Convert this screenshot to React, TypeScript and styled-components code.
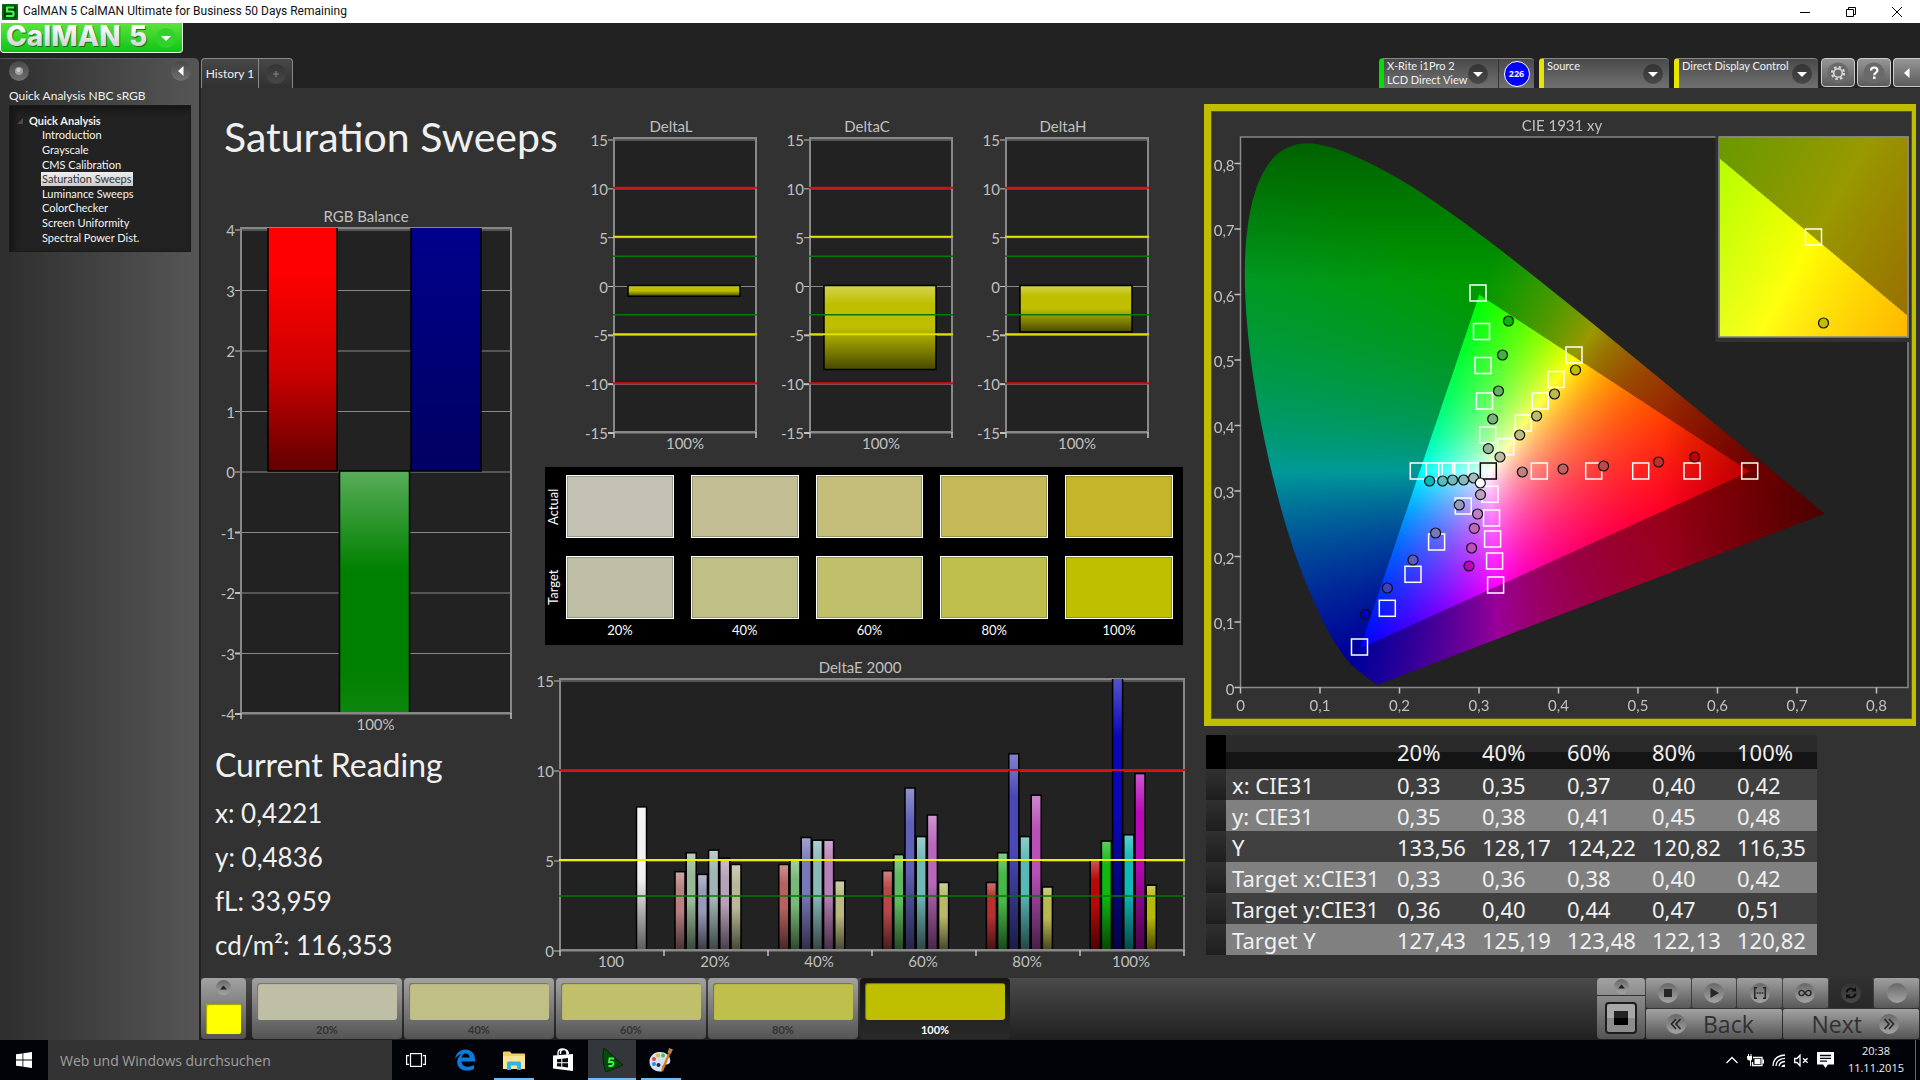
import React, { useLayoutEffect, useRef } from "react";
import styled, { createGlobalStyle, css } from "styled-components";

/* ---------- theme values ---------- */

const ui = '"Lato", "Open Sans", sans-serif';
const system = '"Open Sans", "Noto Sans", sans-serif';
const panelBg = "#323232";
const plotBg = "#222222";
const axisColor = "#888888";
const chartText = "#c0c0c0";

const GlobalStyle = createGlobalStyle`
  *, *::before, *::after { box-sizing: border-box; }
  body { margin: 0; background: #222; color: #f0f0f0; font-family: ${ui}; }
  button, input { font: inherit; color: inherit; border: 0; padding: 0; margin: 0; background: none; }
  h1, h2, p, ul { margin: 0; padding: 0; font-weight: 400; }
  svg, canvas { display: block; }
`;

/* ---------- data ---------- */

const saturations = ["20%", "40%", "60%", "80%", "100%"];
const actualColors = ["#c4c2b2", "#c4be94", "#c5bd7a", "#c5b95a", "#c4b628"];
const targetColors = ["#bfbfa6", "#bfbf86", "#bfbf6c", "#bfbf4c", "#bfbf00"];

const pages = [
  "Introduction",
  "Grayscale",
  "CMS Calibration",
  "Saturation Sweeps",
  "Luminance Sweeps",
  "ColorChecker",
  "Screen Uniformity",
  "Spectral Power Dist.",
];

const readings = ["x: 0,4221", "y: 0,4836", "fL: 33,959", "cd/m²: 116,353"];

const tableRows: [string, string[]][] = [
  ["x: CIE31", ["0,33", "0,35", "0,37", "0,40", "0,42"]],
  ["y: CIE31", ["0,35", "0,38", "0,41", "0,45", "0,48"]],
  ["Y", ["133,56", "128,17", "124,22", "120,82", "116,35"]],
  ["Target x:CIE31", ["0,33", "0,36", "0,38", "0,40", "0,42"]],
  ["Target y:CIE31", ["0,36", "0,40", "0,44", "0,47", "0,51"]],
  ["Target Y", ["127,43", "125,19", "123,48", "122,13", "120,82"]],
];

const sweepBars: { values: number[]; colors: string[] }[] = [
  {
    values: [4.35, 5.4, 4.2, 5.55, 5.1, 4.75],
    colors: ["#b88080", "#98b898", "#9898b8", "#a0b4b4", "#b8a0b8", "#b8b898"],
  },
  {
    values: [4.75, 5.0, 6.25, 6.1, 6.1, 3.85],
    colors: ["#b86060", "#78b878", "#7878b8", "#88b8b8", "#b880b8", "#b8b880"],
  },
  {
    values: [4.4, 5.3, 9.0, 6.3, 7.5, 3.75],
    colors: ["#b84848", "#60b860", "#6060b8", "#70b8b8", "#b868b8", "#b8b868"],
  },
  {
    values: [3.75, 5.4, 10.9, 6.3, 8.6, 3.5],
    colors: ["#b83030", "#48b848", "#4848b8", "#58b8b8", "#b850b8", "#b8b850"],
  },
  {
    values: [5.0, 6.05, 15.2, 6.4, 9.8, 3.6],
    colors: ["#b80808", "#10b810", "#0808b8", "#10b8b8", "#b808b8", "#b8b808"],
  },
];

/* ---------- window frame ---------- */

const Window = styled.div`
  display: flex;
  flex-direction: column;
  min-height: 100vh;
`;

const TitleBar = styled.header`
  display: flex;
  align-items: center;
  height: 23px;
  padding-left: 2px;
  background: #fff;
  color: #111;
  font: 12px/23px "Roboto", ${system};
`;

const TitleText = styled.span`
  flex: 1;
  padding-left: 5px;
`;

const CaptionButton = styled.button`
  display: grid;
  place-items: center;
  width: 46px;
  height: 20px;
`;

const Body = styled.div`
  display: grid;
  grid-template-columns: 199px minmax(0, 1fr);
  flex: 1;
`;

const LeftColumn = styled.div`
  display: flex;
  flex-direction: column;
`;

const LogoButton = styled.button`
  display: flex;
  align-items: center;
  gap: 8px;
  width: 183px;
  height: 30px;
  padding-left: 5px;
  border: 1px solid #e8ffe8;
  border-top: 0;
  border-radius: 0 0 4px 4px;
  background: linear-gradient(#5fe23c, #0fc414);
  overflow: hidden;
`;

const Sidebar = styled.nav`
  flex: 1;
  margin-top: 5px;
  padding: 2px 8px 0 9px;
  border-top: 1px solid #555;
  border-radius: 0 5px 0 0;
  background: linear-gradient(90deg, #2e2e2e, #565656);
`;

const SidebarTop = styled.div`
  display: flex;
  justify-content: space-between;
  height: 26px;
`;

const RoundButton = styled.button`
  display: grid;
  place-items: center;
  flex: none;
  width: 20px;
  height: 20px;
  border-radius: 50%;
  background: linear-gradient(#484848, #707070);
`;

const WorkflowName = styled.div`
  font-size: 12px;
  line-height: 18px;
`;

const Tree = styled.div`
  height: 147px;
  padding: 8px 0 0 17px;
  border: 1px solid #1a1a1a;
  background: #222;
  box-shadow: inset 4px 4px 6px #151515;
  font-size: 11px;
`;

const TreeRoot = styled.div`
  display: flex;
  align-items: center;
  gap: 6px;
  margin-left: -10px;
  line-height: 14px;
  font-weight: 700;
`;

const TreeList = styled.ul`
  display: flex;
  flex-direction: column;
  height: 117px;
  padding-left: 14px;
  list-style: none;
`;

const TreeItem = styled.li`
  display: flex;
  flex: 1;
  align-items: center;
`;

const TreeLink = styled.a<{ $active: boolean }>`
  padding: 0 1px;
  line-height: 14px;
  color: ${(p) => (p.$active ? "#333" : "#f4f4f4")};
  background: ${(p) => (p.$active ? "linear-gradient(#eee, #ccc)" : "none")};
  text-decoration: none;
  white-space: nowrap;
`;

/* ---------- top bar ---------- */

const Workspace = styled.main`
  display: flex;
  flex-direction: column;
  min-width: 0;
  border-left: 2px solid #222;
`;

const TopBar = styled.div`
  display: flex;
  justify-content: space-between;
  height: 65px;
  padding-top: 35px;
`;

const Tabs = styled.div`
  display: flex;
  height: 30px;
  border: 1px solid #888;
  border-bottom: 0;
  border-radius: 4px 4px 0 0;
  background: linear-gradient(#484848, #303030);
`;

const Tab = styled.button`
  width: 57px;
  border-right: 1px solid #888;
  font-size: 12px;
`;

const AddTab = styled.button`
  display: grid;
  place-items: center;
  width: 33px;
`;

const Devices = styled.div`
  display: flex;
  gap: 5px;
`;

const Device = styled.div<{ $width: number; $mark: string }>`
  display: flex;
  width: ${(p) => p.$width}px;
  height: 30px;
  border-top: 1px solid #888;
  border-left: 5px solid ${(p) => p.$mark};
  border-radius: 4px 4px 0 0;
  background: linear-gradient(#4a4a4a, #707070);
`;

const DeviceMenu = styled.button<{ $inset?: number }>`
  display: flex;
  flex: 1;
  align-items: center;
  justify-content: space-between;
  padding: 0 ${(p) => p.$inset ?? 6}px 0 3px;
  font-size: 11px;
  line-height: 14px;
  text-align: left;
  white-space: nowrap;
`;

const DeviceLabel = styled.span`
  align-self: flex-start;
`;

const Counter = styled.div`
  display: grid;
  place-items: center;
  width: 36px;
  border-left: 1px solid #333;
`;

const CounterBadge = styled.span`
  width: 26px;
  height: 26px;
  border: 1px solid #fff;
  border-radius: 50%;
  background: #0000ff;
  font: 700 9px/24px ${system};
  text-align: center;
`;

const Tools = styled.div`
  display: flex;
  gap: 2px;
  margin-left: -2px;
`;

const ToolButton = styled.button<{ $edge?: boolean }>`
  display: grid;
  place-items: center;
  width: ${(p) => (p.$edge ? 27 : 34)}px;
  height: 29px;
  border: 1px solid #ccc;
  border-right-width: ${(p) => (p.$edge ? 0 : 1)}px;
  border-radius: ${(p) => (p.$edge ? "4px 0 0 4px" : "4px")};
  background: linear-gradient(#969696, #5c5c5c);
`;

/* ---------- content ---------- */

const Content = styled.div`
  display: grid;
  grid-template-columns: minmax(0, 334fr) minmax(0, 669fr) minmax(0, 712fr);
  align-items: start;
  flex: 1;
  padding-right: 4px;
  background: ${panelBg};
`;

const ReadingColumn = styled.section`
  padding-top: 24px;
`;

const Heading = styled.h1`
  padding-left: 23px;
  margin-bottom: 38px;
  font-size: 41px;
  line-height: 50px;
  white-space: nowrap;
`;

const Reading = styled.div`
  padding: 10px 0 0 14px;
`;

const ReadingTitle = styled.h2`
  margin-bottom: 6px;
  font-size: 32px;
  line-height: 40px;
`;

const ReadingLine = styled.p`
  font-size: 26px;
  line-height: 44px;
`;

const SweepColumn = styled.section`
  padding-top: 25px;
`;

const DeltaRow = styled.div`
  display: grid;
  grid-template-columns: repeat(3, minmax(0, 1fr));
  padding: 0 49px 0 32px;
`;

const ChartSvg = styled.svg`
  width: 100%;
  height: auto;
  font-family: ${ui};
  font-size: 15px;
  fill: ${chartText};
`;

const SwatchPanel = styled.div`
  display: grid;
  grid-template-rows: 63px 63px 20px;
  row-gap: 18px;
  height: 178px;
  margin: 12px 21px 10px 10px;
  padding: 8px 10px 0 0;
  background: #000;
  color: #fff;
  font-size: 13px;
`;

const SwatchRow = styled.div`
  display: grid;
  grid-template-columns: 21px minmax(0, 1fr);
`;

const SwatchCaption = styled.span`
  width: 17px;
  line-height: 17px;
  text-align: center;
  writing-mode: vertical-rl;
  transform: rotate(180deg);
`;

const SwatchCells = styled.div`
  display: grid;
  grid-column: 2;
  grid-template-columns: repeat(5, 1fr);
  column-gap: 17px;
`;

const SwatchCell = styled.div<{ $color: string }>`
  border: 1px solid #fff;
  background: ${(p) => p.$color};
  box-shadow: inset 0 0 0 1px rgba(0, 0, 0, 0.2);
`;

const SwatchLabel = styled.span`
  margin-top: -15px;
  line-height: 17px;
  text-align: center;
`;

const GamutColumn = styled.section`
  padding-top: 16px;
`;

const GamutFrame = styled.div`
  display: grid;
  border: 7px solid #bfbf00;
  border-right-width: 4px;
  box-shadow: inset 0 0 0 1px #5a5a20;

  > * {
    grid-area: 1 / 1;
  }
`;

const GamutCanvas = styled.canvas`
  width: 100%;
  height: auto;
`;

const DataTable = styled.table`
  width: 611px;
  margin: 9px 0 0 2px;
  border-collapse: collapse;
  table-layout: fixed;
  font: 22px/30px "Noto Sans", sans-serif;
  text-align: left;
`;

const Column = styled.col<{ $width: number }>`
  width: ${(p) => p.$width}px;
`;

const HeadCell = styled.th<{ $corner?: boolean }>`
  height: 34px;
  padding: 0;
  font-weight: 400;
  background: ${(p) => (p.$corner ? "#000" : "linear-gradient(#2a2a2a 0 50%, #141414 50% 100%)")};
`;

const RowMark = styled.td`
  padding: 0;
  background: linear-gradient(#303030, #1e1e1e);
`;

const BodyRow = styled.tr<{ $light: boolean }>`
  height: 31px;
  background: ${(p) => (p.$light ? "#808080" : "#404040")};
`;

const RowHead = styled.th`
  padding: 0 0 0 6px;
  font-weight: 400;
  white-space: nowrap;
`;

const Cell = styled.td`
  padding: 0;
`;

/* ---------- pattern bar ---------- */

const PatternBar = styled.div`
  display: flex;
  height: 62px;
  background: linear-gradient(#4a4a4a, #202020);
`;

const metal = css`
  background: linear-gradient(#a2a2a2, #545454);
`;

const CurrentPattern = styled.button`
  display: flex;
  flex-direction: column;
  align-items: center;
  justify-content: space-between;
  width: 45px;
  height: 61px;
  margin-right: 6px;
  padding: 2px 0 5px;
  border-radius: 4px;
  ${metal}
`;

const CurrentColor = styled.span`
  width: 35px;
  height: 30px;
  border-radius: 2px;
  background: #ffff00;
  box-shadow: inset 1px 1px 1px #a0a000;
`;

const PatternButton = styled.button<{ $active: boolean }>`
  display: flex;
  flex-direction: column;
  width: 150px;
  height: 61px;
  margin-right: 2px;
  padding: 5px 5px 0;
  border-radius: 4px;
  ${metal}
  color: #333;
  font-size: 11px;
  font-weight: 700;
  ${(p) =>
    p.$active &&
    css`
      background: linear-gradient(#161616, #2a2a2a);
      color: #fff;
    `}
`;

const PatternColor = styled.span<{ $color: string }>`
  width: 100%;
  height: 37px;
  margin-bottom: 3px;
  border-radius: 3px;
  background: ${(p) => p.$color};
  box-shadow: inset 1px 1px 1px rgba(0, 0, 0, 0.4);
`;

const PatternLabel = styled.span`
  width: 100%;
  line-height: 14px;
  text-align: center;
`;

const Transport = styled.div`
  display: flex;
  gap: 1px;
  margin-left: auto;
  padding-right: 1px;
`;

const WindowPicker = styled.button`
  display: flex;
  flex-direction: column;
  align-items: center;
  width: 48px;
  height: 61px;
  border-radius: 4px;
  ${metal}
`;

const PickerTop = styled.span`
  display: grid;
  place-items: center;
  width: 100%;
  height: 18px;
  border-bottom: 1px solid #333;
`;

const PickerFrame = styled.span`
  display: grid;
  place-items: center;
  width: 32px;
  height: 32px;
  margin-top: 6px;
  border: 2px solid #1c1c1c;
  border-radius: 4px;
  background: linear-gradient(#a8a8a8 50%, #8c8c8c 50%);
`;

const PickerSquare = styled.span`
  width: 14px;
  height: 14px;
  background: linear-gradient(#222 50%, #000 50%);
`;

const TransportGrid = styled.div`
  display: grid;
  grid-template-columns: repeat(6, minmax(0, 1fr));
  grid-template-rows: 30px 30px;
  gap: 1px;
  width: 273px;
`;

const TransportButton = styled.button<{ $pressed?: boolean }>`
  display: grid;
  place-items: center;
  border-radius: 2px;
  background: ${(p) => (p.$pressed ? "linear-gradient(#303030, #282828)" : "linear-gradient(#a0a0a0, #585858)")};
`;

const Disc = styled.span<{ $size: number; $dark?: boolean }>`
  display: grid;
  place-items: center;
  flex: none;
  width: ${(p) => p.$size}px;
  height: ${(p) => p.$size}px;
  border-radius: 50%;
  background: ${(p) => (p.$dark ? "linear-gradient(#343434, #484848)" : "linear-gradient(#686868, #a4a4a4)")};
`;

const StepButton = styled.button<{ $forward?: boolean }>`
  display: flex;
  grid-column: span 3;
  align-items: center;
  justify-content: ${(p) => (p.$forward ? "flex-end" : "flex-start")};
  gap: 17px;
  padding: 0 20px;
  border-radius: 2px;
  ${metal}
  color: #303030;
  font: 23px/28px ${system};
`;

/* ---------- taskbar ---------- */

const Taskbar = styled.footer`
  display: flex;
  height: 40px;
  background: #010308;
  font-family: ${system};
`;

const StartButton = styled.button`
  display: grid;
  place-items: center;
  width: 48px;
`;

const Search = styled.input`
  width: 344px;
  padding-left: 12px;
  background: #333;
  font-size: 14px;
  outline: 0;

  &::placeholder {
    color: #a0a0a0;
    opacity: 1;
  }
`;

const TaskButton = styled.button<{ $open?: boolean; $active?: boolean }>`
  display: grid;
  place-items: center;
  width: ${(p) => (p.$active ? 48 : p.$open ? 40 : 48)}px;
  margin: 0 ${(p) => (p.$open && !p.$active ? 4 : 0)}px;
  padding-top: ${(p) => (p.$open ? 2 : 0)}px;
  border-bottom: ${(p) => (p.$open ? "2px solid #76b9ed" : "0")};
  background: ${(p) => (p.$active ? "#33373c" : "none")};
`;

const Apps = styled.div`
  display: flex;
  gap: 1px;
`;

const Tray = styled.div`
  display: flex;
  align-items: center;
  gap: 8px;
  margin-left: auto;
  padding-right: 4px;
`;

const Clock = styled.time`
  height: 40px;
  margin-left: 6px;
  padding: 2px 11px 0 0;
  border-right: 1px solid #666;
  font-size: 11px;
  line-height: 17px;
  text-align: center;
`;

/* ---------- charts ---------- */

type Bar = { x: number; w: number; from: number; to: number; color: string; shade?: string };
type Limit = { value: number; color: string };

type BarChartProps = {
  id: string;
  title: string;
  titleX: number;
  size: [number, number];
  plot: [number, number, number, number];
  range: [number, number];
  step: number;
  bars: Bar[];
  limits?: Limit[];
  labels: { x: number; text: string }[];
  ticks: number[];
};

function BarChart({ id, title, titleX, size, plot, range, step, bars, limits = [], labels, ticks }: BarChartProps) {
  const [px, py, pw, ph] = plot;
  const [min, max] = range;
  const top = py + 2;
  const toY = (v: number) => top + ((max - v) / (max - min)) * (ph - 1);
  const marks: number[] = [];
  for (let v = max; v >= min; v -= step) marks.push(v);

  return (
    <ChartSvg viewBox={`0 0 ${size[0]} ${size[1]}`} role="img" aria-label={title}>
      <defs>
        <linearGradient id={`${id}-gloss`} x1="0" y1="0" x2="0" y2="1">
          <stop offset="0" stopColor="#fff" stopOpacity="0.32" />
          <stop offset="0.22" stopColor="#fff" stopOpacity="0" />
          <stop offset="0.5" stopColor="#000" stopOpacity="0" />
          <stop offset="1" stopColor="#000" stopOpacity="0.62" />
        </linearGradient>
        <linearGradient id={`${id}-fade`} x1="0" y1="0" x2="0" y2="1">
          <stop offset="0.2" stopColor="#000" stopOpacity="0" />
          <stop offset="0.6" stopColor="#000" stopOpacity="0.2" />
          <stop offset="1" stopColor="#000" stopOpacity="0.62" />
        </linearGradient>
        <linearGradient id={`${id}-tip`} x1="0" y1="0" x2="0" y2="1">
          <stop offset="0" stopColor="#fff" stopOpacity="0.35" />
          <stop offset="0.4" stopColor="#fff" stopOpacity="0" />
          <stop offset="0.8" stopColor="#fff" stopOpacity="0" />
          <stop offset="1" stopColor="#fff" stopOpacity="0.06" />
        </linearGradient>
        <linearGradient id={`${id}-deep`} x1="0" y1="0" x2="0" y2="1">
          <stop offset="0" stopColor="#000" stopOpacity="0" />
          <stop offset="1" stopColor="#000" stopOpacity="0.3" />
        </linearGradient>
        <clipPath id={`${id}-clip`}>
          <rect x={px} y={py} width={pw} height={ph} />
        </clipPath>
      </defs>
      <text x={titleX} y={py - 6} textAnchor="middle">
        {title}
      </text>
      <rect x={px} y={py} width={pw} height={ph} fill={plotBg} />
      {marks.map((v) => (
        <g key={v}>
          <line x1={px} x2={px + pw} y1={toY(v)} y2={toY(v)} stroke={axisColor} />
          <line x1={px - 6} x2={px} y1={toY(v)} y2={toY(v)} stroke={chartText} strokeWidth={v < 0 ? 2 : 1} />
          <text x={px - 6} y={toY(v) + 6} textAnchor="end">
            {v}
          </text>
        </g>
      ))}
      <rect x={px} y={py} width={pw} height={ph} fill="none" stroke={axisColor} strokeWidth="2" />
      <g clipPath={`url(#${id}-clip)`}>
        {bars.map((b, i) => {
          const y = toY(Math.max(b.from, b.to)) - 1;
          const h = toY(Math.min(b.from, b.to)) - 1 - y;
          return (
            <g key={i}>
              <rect x={b.x} y={y} width={b.w} height={h} fill={b.color} />
              <rect
                x={b.x}
                y={y}
                width={b.w}
                height={h}
                fill={`url(#${id}-${b.shade ?? "gloss"})`}
                stroke="#000"
                strokeWidth="1.5"
              />
            </g>
          );
        })}
      </g>
      <line x1={px} x2={px + pw} y1={py + ph} y2={py + ph} stroke={axisColor} strokeWidth="2" />
      {limits.map((l, i) => (
        <line
          key={i}
          x1={px - 1}
          x2={px + pw + 1}
          y1={toY(l.value) - 1}
          y2={toY(l.value) - 1}
          stroke={l.color}
          strokeWidth={l.color === "#007a00" ? 1.5 : 2}
        />
      ))}
      {ticks.map((x) => (
        <line key={x} x1={x} x2={x} y1={py + ph} y2={py + ph + 6} stroke={chartText} strokeWidth="1.5" />
      ))}
      {labels.map((l) => (
        <text key={l.text} x={l.x} y={py + ph + 17} textAnchor="middle">
          {l.text}
        </text>
      ))}
    </ChartSvg>
  );
}

const deltaLimits: Limit[] = [10, -10, 5, -5, 3, -3].map((value) => ({
  value,
  color: Math.abs(value) === 10 ? "#dc0a0a" : Math.abs(value) === 5 ? "#e0e000" : "#007a00",
}));

function DeltaChart({ name, value }: { name: string; value: number }) {
  return (
    <BarChart
      id={name}
      title={name}
      titleX={104}
      size={[196, 342]}
      plot={[47, 25, 142, 294]}
      range={[-15, 15]}
      step={5}
      bars={[{ x: 61, w: 112, from: 0, to: value, color: "#bfbf00" }]}
      limits={deltaLimits}
      labels={[{ x: 118, text: "100%" }]}
      ticks={[47, 189]}
    />
  );
}

/* ---------- CIE 1931 chromaticity diagram ---------- */

const GW = 701;
const GH = 608;
const box = { x: 29.5, y: 26, w: 667.5, h: 550.5 };
const inset = { x: 508, y: 26, w: 189, h: 200 };

const locus: [number, number][] = [
  [0.1741, 0.005], [0.1733, 0.0048], [0.1714, 0.0051], [0.1689, 0.0069], [0.1644, 0.0109],
  [0.1566, 0.0177], [0.144, 0.0297], [0.1355, 0.0399], [0.1241, 0.0578], [0.1096, 0.0868],
  [0.0913, 0.1327], [0.0687, 0.2007], [0.0454, 0.295], [0.0235, 0.4127], [0.0082, 0.5384],
  [0.0039, 0.6548], [0.0139, 0.7502], [0.0389, 0.812], [0.0743, 0.8338], [0.1142, 0.8262],
  [0.1547, 0.8059], [0.1929, 0.7816], [0.2296, 0.7543], [0.3016, 0.6923], [0.3731, 0.6245],
  [0.4441, 0.5547], [0.5125, 0.4866], [0.5752, 0.4242], [0.627, 0.3725], [0.6658, 0.334],
  [0.6915, 0.3083], [0.719, 0.2809], [0.7347, 0.2653],
];

const toPlot = (x: number, y: number): [number, number] => [box.x + x * 795, box.y + box.h - y * 655];

function xyColor(x: number, y: number): [number, number, number] {
  const yy = Math.max(y, 0.001);
  const X = x / yy;
  const Z = (1 - x - yy) / yy;
  const r = 3.2406 * X - 1.5372 - 0.4986 * Z;
  const g = -0.9689 * X + 1.8758 + 0.0415 * Z;
  const b = 0.0557 * X - 0.204 + 1.057 * Z;
  const inside = r >= 0 && g >= 0 && b >= 0;
  let level = 255 / Math.max(r, g, b);
  if (!inside) level *= 0.6;
  if (x > 0.53) level *= Math.max(0.5, 1 - (x - 0.53) * 2.5);
  if (y > 0.62) level *= Math.max(0.6, 1 - (y - 0.62) * 1.7);
  return [Math.max(0, r * level), Math.max(0, g * level), Math.max(0, b * level)];
}

function paintGamut(canvas: HTMLCanvasElement) {
  const scale = 2;
  const w = GW * scale;
  const h = GH * scale;
  canvas.width = w;
  canvas.height = h;
  const ctx = canvas.getContext("2d");
  if (!ctx) return;

  const fill = (ox: number, oy: number, iw: number, ih: number, map: (x: number, y: number) => [number, number]) => {
    const img = ctx.createImageData(iw, ih);
    for (let j = 0; j < ih; j++) {
      for (let i = 0; i < iw; i++) {
        const [cx, cy] = map((ox + i) / scale, (oy + j) / scale);
        const [r, g, b] = xyColor(cx, cy);
        const k = (j * iw + i) * 4;
        img.data[k] = r;
        img.data[k + 1] = g;
        img.data[k + 2] = b;
        img.data[k + 3] = 255;
      }
    }
    ctx.putImageData(img, ox, oy);
  };

  fill(0, 0, w, h, (px, py) => [(px - box.x) / 795, (box.y + box.h - py) / 655]);

  ctx.globalCompositeOperation = "destination-in";
  ctx.scale(scale, scale);
  const pts = locus.map(([x, y]) => toPlot(x, y));
  ctx.beginPath();
  ctx.moveTo(pts[0][0], pts[0][1]);
  for (let i = 1; i < pts.length - 1; i++) {
    const mx = (pts[i][0] + pts[i + 1][0]) / 2;
    const my = (pts[i][1] + pts[i + 1][1]) / 2;
    ctx.quadraticCurveTo(pts[i][0], pts[i][1], mx, my);
  }
  ctx.lineTo(pts[pts.length - 1][0], pts[pts.length - 1][1]);
  ctx.closePath();
  ctx.fill();

  ctx.globalCompositeOperation = "destination-over";
  ctx.fillStyle = plotBg;
  ctx.fillRect(box.x, box.y, box.w, box.h);

  ctx.globalCompositeOperation = "source-over";
  fill(inset.x * scale, inset.y * scale, inset.w * scale, inset.h * scale, (px, py) => [
    0.4193 + (px - 602.6) / 3780,
    0.5053 - (py - 126) / 3980,
  ]);
}

const targets: [number, number][] = [
  [267, 182], [270.5, 220.5], [272, 254.5], [273.5, 290], [276.7, 324],
  [363, 244], [345, 268.5], [329.3, 290], [312.3, 312], [294.7, 335.7],
  [328.3, 360], [382.7, 360], [429.7, 360], [481, 360], [538.7, 360],
  [207.3, 360], [223.3, 360], [235.7, 360], [249.7, 360], [265.3, 360],
  [279, 383.3], [280.5, 407], [281.6, 428], [283.6, 450], [284.6, 474],
  [252.3, 395], [225.6, 431], [202, 463.3], [176.3, 497.3], [148.5, 536],
];

const measured: [number, number, string][] = [
  [297.5, 210, "#00b800"], [291.5, 244, "#40b040"], [287.5, 280, "#60b460"], [281.7, 308, "#78b478"], [277.3, 337.6, "#98b898"],
  [364.5, 259, "#bfbf00"], [343.5, 283, "#bcbc4c"], [325.6, 305, "#bcbc6c"], [308.7, 324, "#bcbc86"], [289, 346, "#bcbca6"],
  [311.3, 361, "#c08080"], [352, 358, "#c06060"], [392.6, 355, "#c04848"], [447.6, 351, "#c03030"], [483.6, 346, "#bf0000"],
  [218.6, 370, "#00bcbc"], [231.6, 370, "#58bcbc"], [241.6, 369, "#70bcbc"], [252.6, 369, "#88bcbc"], [262.6, 367, "#a4bcbc"],
  [248.3, 394, "#9898c0"], [224.6, 422, "#7878c0"], [202, 449, "#5c5cc0"], [176.3, 477, "#4040c0"], [154.3, 503.3, "#0000bf"],
  [269.5, 383.6, "#c0a0c0"], [266.6, 403, "#c080c0"], [263.3, 417.3, "#c068c0"], [260.6, 437, "#c04cc0"], [258, 455, "#bf00bf"],
  [269.3, 372, "#ffffff"],
];

function GamutChart() {
  const ref = useRef<HTMLCanvasElement>(null);
  useLayoutEffect(() => {
    if (ref.current) paintGamut(ref.current);
  }, []);
  const right = box.x + box.w;
  const bottom = box.y + box.h;
  const steps = [0, 1, 2, 3, 4, 5, 6, 7, 8];

  return (
    <GamutFrame>
      <GamutCanvas ref={ref} width={GW} height={GH} />
      <ChartSvg viewBox={`0 0 ${GW} ${GH}`} role="img" aria-label="CIE 1931 xy">
        <text x="351" y="20" textAnchor="middle">CIE 1931 xy</text>
        <rect x={box.x} y={box.y} width={box.w} height={box.h} fill="none" stroke={axisColor} strokeWidth="1.5" />
        {steps.map((s) => {
          const [x, y] = toPlot(s / 10, s / 10);
          const label = s === 0 ? "0" : `0,${s}`;
          return (
            <g key={s}>
              <line x1={x} x2={x} y1={bottom} y2={bottom + 6} stroke={chartText} strokeWidth="1.5" />
              <line x1={box.x - 6} x2={box.x} y1={y} y2={y} stroke={chartText} strokeWidth="1.5" />
              <text x={x} y={bottom + 23} textAnchor="middle">{label}</text>
              <text x={box.x - 6} y={y + 7} textAnchor="end">{label}</text>
            </g>
          );
        })}
        <path
          d={`M${inset.x - 1.5} ${inset.y - 1}V${inset.y + inset.h + 3}H${right + 1}`}
          fill="none"
          stroke={panelBg}
          strokeWidth="4"
        />
        <rect x={inset.x} y={inset.y} width={inset.w} height={inset.h} fill="none" stroke={axisColor} strokeWidth="1.5" />
        <rect x="594.5" y="118" width="16" height="16" fill="none" stroke="#fff" strokeWidth="1.5" />
        <circle cx="612.5" cy="212" r="5" fill="#bfbf00" stroke="#111" strokeWidth="1.2" />
        {targets.map(([x, y]) => (
          <rect key={`${x}-${y}`} x={x - 8} y={y - 8} width="16" height="16" fill="none" stroke="#fff" strokeWidth="1.5" />
        ))}
        <rect x="269.3" y="352" width="16" height="16" fill="none" stroke="#000" strokeWidth="1.5" />
        {measured.map(([x, y, c]) => (
          <circle key={`${x}-${y}`} cx={x} cy={y} r="5" fill={c} stroke="#111" strokeWidth="1.2" />
        ))}
      </ChartSvg>
    </GamutFrame>
  );
}

/* ---------- icons ---------- */

const Arrow = ({ dir, color = "#fff", size = 10 }: { dir: "down" | "left" | "up"; color?: string; size?: number }) => (
  <svg width={size} height={size} viewBox="0 0 10 10" fill={color}>
    {dir === "down" && <path d="M0 3h10L5 8z" />}
    {dir === "left" && <path d="M7.500 0v10L2 5z" />}
    {dir === "up" && <path d="M0 8h10L5 2z" />}
  </svg>
);

const AppBadge = () => (
  <svg width="16" height="16" viewBox="0 0 16 16">
    <rect width="16" height="16" rx="1" fill="#053d08" />
    <rect x="1" y="1" width="14" height="14" fill="none" stroke="#0b8a14" />
    <path d="M12 3.500H5v4h5q1.500 0 1.500 1.500v1.500q0 1.500-1.500 1.500H4" fill="none" stroke="#3dff4a" strokeWidth="2.200" />
  </svg>
);

const LogoMark = () => (
  <svg width="142" height="29" viewBox="0 0 142 29">
    <defs>
      <linearGradient id="logo-silver" x1="0" y1="0" x2="0" y2="1">
        <stop offset="0.2" stopColor="#ffffff" />
        <stop offset="1" stopColor="#c4c4c4" />
      </linearGradient>
    </defs>
    <g fontFamily="Inter, sans-serif" fontWeight="800" fontSize="28">
      <text x="1" y="24" fill="#0a7a10">CalMAN</text>
      <text x="0" y="23" fill="url(#logo-silver)">CalMAN</text>
      <text x="124" y="24" fill="#0a7a10">5</text>
      <text x="123" y="23" fill="url(#logo-silver)">5</text>
    </g>
  </svg>
);

const Gear = () => (
  <svg width="22" height="22" viewBox="0 0 22 22">
    <circle cx="11" cy="11" r="10.500" fill="#6a6a6a" />
    <circle cx="11" cy="11" r="4.300" fill="none" stroke="#d8d8d8" strokeWidth="1.600" />
    <circle cx="11" cy="11" r="6" fill="none" stroke="#d8d8d8" strokeWidth="2.200" strokeDasharray="2.400 2.312" />
  </svg>
);

const Help = () => (
  <svg width="22" height="22" viewBox="0 0 22 22">
    <circle cx="11" cy="11" r="10.500" fill="#6a6a6a" />
    <path d="M8 8.500q0-3 3.200-3t3.200 2.800q0 1.600-1.700 2.600-1.500.9-1.500 2.300" fill="none" stroke="#fff" strokeWidth="2.200" />
    <rect x="10" y="14.500" width="2.500" height="2.500" fill="#fff" />
  </svg>
);

const WindowsFlag = () => (
  <svg width="16" height="16" viewBox="0 0 16 16" fill="#fff">
    <path d="M0 2.300 6.500 1.400V7.600H0zM7.300 1.300 16 0v7.600H7.300zM0 8.400h6.500v6.200L0 13.700zM7.300 8.400H16V16l-8.700-1.300z" />
  </svg>
);

const TaskView = () => (
  <svg width="20" height="14" viewBox="0 0 20 14" fill="none" stroke="#fff" strokeWidth="1.200">
    <rect x="4.500" y=".6" width="11" height="12.800" />
    <path d="M3 2.600H.6v8.800H3M17 2.600h2.400v8.800H17" />
  </svg>
);

const Edge = () => (
  <svg width="22" height="22" viewBox="0 0 22 22">
    <path
      d="M1 10C2 4 6 .5 11.500.5c6 0 9.500 4.500 9.500 9.500v2.500H7.500c.2 3.500 3 5.300 6.300 5.300 2.500 0 4.500-.7 6.200-1.700v4c-2 1-4.300 1.500-6.800 1.500C7 21.600 3.200 18 3.200 13c0-3.500 1.800-6.300 4.800-7.800C4.800 5.600 2.500 7.500 1 10zm6.600-1.500h8c0-2.300-1.300-4-3.800-4s-3.900 1.700-4.200 4z"
      fill="#0a7bdc"
    />
  </svg>
);

const Explorer = () => (
  <svg width="22" height="19" viewBox="0 0 22 19">
    <path d="M0 1.500Q0 .5 1 .5h6l1.500 2H21q1 0 1 1V18H0z" fill="#f5cf66" />
    <path d="M0 5h22v13H0z" fill="#ffe592" />
    <path d="M4 19v-7q0-1.500 1.500-1.500h11Q18 10.500 18 12v7h-4v-4.500H8V19z" fill="#2fb4ea" />
  </svg>
);

const Store = () => (
  <svg width="22" height="24" viewBox="0 0 22 24">
    <path d="M6 7V4.500Q6.500 1 10.500 1T15 5v2M8.500 6V4q.5-3 4-2.500T16.500 6" fill="none" stroke="#fff" strokeWidth="1.400" />
    <path d="M1 7.500 21 6v17L1 20.500z" fill="#fff" />
    <path d="M5 11.300l4.300-.5v3.500H5zM10.300 10.700l5.700-.7v4.200h-5.700zM5 15.200h4.300v3.500L5 18.200zM10.300 15.200H16v4.300l-5.700-.7z" fill="#05070c" />
  </svg>
);

const CalmanTask = () => (
  <svg width="22" height="24" viewBox="0 0 22 24">
    <path d="M3 0 22 17 5 24Q0 12 3 0z" fill="#064a0a" />
    <path d="M3 0 22 17 5 24Q0 12 3 0z" fill="none" stroke="#022304" />
    <path d="M13 10.500H8.500L8 14h3q1.800.3 1.500 2T10.500 18H7.500" fill="none" stroke="#35ff45" strokeWidth="1.800" />
  </svg>
);

const Paint = () => (
  <svg width="24" height="24" viewBox="0 0 24 24">
    <path d="M10 4C4 4.500 0 9 .5 14.500 1 20 6 24 11.500 23.500c3 0 3-2 2.200-4-.6-2 .5-3 3-3 3.500 0 5-2 4.500-5C20.500 7 16 3.500 10 4z" fill="#cfe3f2" />
    <circle cx="5" cy="11" r="2" fill="#e24a3a" />
    <circle cx="9" cy="7.500" r="2" fill="#f0b030" />
    <circle cx="14" cy="7.500" r="2" fill="#58b848" />
    <circle cx="5" cy="16" r="2" fill="#4080d8" />
    <circle cx="9.500" cy="17" r="2" fill="#2a2a3a" />
    <path d="M13 23 20 6" stroke="#e07818" strokeWidth="2.200" />
    <path d="M18.500 5 20 0l4 1.500-2.500 5z" fill="#b88050" />
  </svg>
);

const TrayIcon = ({ name }: { name: "chevron" | "power" | "wifi" | "sound" | "note" }) => {
  const stroke = { fill: "none", stroke: "#fff", strokeWidth: 1.3 };
  switch (name) {
    case "chevron":
      return <svg width="14" height="8" viewBox="0 0 14 8"><path d="M1.500 7 7 1.500 12.500 7" {...stroke} /></svg>;
    case "power":
      return (
        <svg width="17" height="13" viewBox="0 0 17 13">
          <path d="M6 3.500h9v8H5.500V8" {...stroke} />
          <path d="M7.500 5h6v5h-6zM15.500 5.500H17v4h-1.500zM0 2h5v3q0 1-1 1.500V12H3V6.500H2Q0 6 0 4zM1 0h1v2H1zM3.500 0h1v2h-1z" fill="#fff" />
        </svg>
      );
    case "wifi":
      return (
        <svg width="14" height="13" viewBox="0 0 14 13">
          <path d="M1 12Q1 2 13 1M4 12Q4.500 5 13 4.300M7 12.200Q7.500 8 13 7.500" {...stroke} />
          <path d="M9.500 13q0-2.500 3.500-2.500V13z" fill="#fff" />
        </svg>
      );
    case "sound":
      return (
        <svg width="15" height="13" viewBox="0 0 15 13">
          <path d="M.7 4.500H3L6 1.200v10.600L3 8.500H.7zM9 4.200l4.600 4.600M13.600 4.200 9 8.800" {...stroke} />
        </svg>
      );
    default:
      return (
        <svg width="17" height="16" viewBox="0 0 17 16">
          <path d="M0 0h17v12.500h-6L8.500 16 6 12.500H0z" fill="#fff" />
          <path d="M3 3.500h11M3 6.300h11M3 9.100h7" stroke="#05070c" strokeWidth="1.300" />
        </svg>
      );
  }
};

const ink = "#262626";
const transportIcons: { label: string; icon: React.ReactNode; pressed?: boolean }[] = [
  { label: "Stop", icon: <rect x="3" y="3" width="8" height="8" fill={ink} /> },
  { label: "Read", icon: <path d="M3.500 2v10L12 7z" fill={ink} /> },
  {
    label: "Read series",
    icon: <path d="M4 1.700H1.700v10.600H4M10 1.700h2.300v10.600H10M3.600 7h1.600M6.200 7h1.600M8.800 7h1.600" fill="none" stroke={ink} strokeWidth="1.500" />,
  },
  {
    label: "Read continuously",
    icon: <path d="M7 7C5.800 5.200 5 4.400 3.600 4.400a2.600 2.600 0 0 0 0 5.200C5 9.600 5.800 8.800 7 7s2-2.600 3.400-2.600a2.600 2.600 0 0 1 0 5.200C9 9.600 8.200 8.800 7 7z" fill="none" stroke={ink} strokeWidth="1.400" />,
  },
  {
    label: "Refresh",
    pressed: true,
    icon: (
      <g stroke="#101010" fill="none" strokeWidth="2">
        <path d="M2.500 6.500A4.500 4.500 0 0 1 10 3.800M11.500 7.500A4.500 4.500 0 0 1 4 10.200" />
        <path d="M12 1v4.500H7.500zM2 13V8.500h4.500z" fill="#101010" stroke="none" />
      </g>
    ),
  },
  { label: "Record", icon: null },
];

const Chevrons = ({ flip }: { flip?: boolean }) => (
  <svg width="12" height="12" viewBox="0 0 12 12" fill="none" stroke={ink} strokeWidth="1.600">
    <path d={flip ? "M1.500 1 6 6l-4.500 5M6 1l4.500 5L6 11" : "M6 1 1.500 6 6 11M10.500 1 6 6l4.500 5"} />
  </svg>
);

/* ---------- page ---------- */

const deltaEBars: Bar[] = [
  { x: 101.5, w: 10, from: 0, to: 7.95, color: "#f2f2f2" },
  ...sweepBars.flatMap((group, gi) =>
    group.values.map((to, i) => ({
      x: 140 + gi * 103.8 + i * 11.2,
      w: 10,
      from: 0,
      to,
      color: group.colors[i],
    }))
  ),
];

export default function App() {
  return (
    <Window>
      <GlobalStyle />
      <TitleBar>
        <AppBadge />
        <TitleText>CalMAN 5 CalMAN Ultimate for Business 50 Days Remaining</TitleText>
        <CaptionButton aria-label="Minimize">
          <svg width="10" height="10" viewBox="0 0 10 10"><path d="M0 5.500h10" stroke="#000" /></svg>
        </CaptionButton>
        <CaptionButton aria-label="Restore">
          <svg width="10" height="10" viewBox="0 0 10 10" fill="none" stroke="#000"><path d="M.5 2.500h7v7h-7zM2.500 2.500v-2h7v7h-2" /></svg>
        </CaptionButton>
        <CaptionButton aria-label="Close">
          <svg width="10" height="10" viewBox="0 0 10 10"><path d="M0 0l10 10M10 0 0 10" stroke="#000" /></svg>
        </CaptionButton>
      </TitleBar>

      <Body>
        <LeftColumn>
          <LogoButton aria-label="CalMAN 5 menu">
            <LogoMark />
            <svg width="20" height="20" viewBox="0 0 20 20">
              <circle cx="10" cy="10" r="10" fill="#2fd32c" />
              <path d="M5 8h10l-5 5z" fill="#fff" />
            </svg>
          </LogoButton>
          <Sidebar>
            <SidebarTop>
              <RoundButton aria-label="Workflow options">
                <svg width="8" height="8" viewBox="0 0 8 8"><circle cx="4" cy="4" r="4" fill="#a0a0a0" /><circle cx="3.500" cy="3" r="2" fill="#ccc" /></svg>
              </RoundButton>
              <RoundButton aria-label="Collapse"><Arrow dir="left" /></RoundButton>
            </SidebarTop>
            <WorkflowName>Quick Analysis NBC sRGB</WorkflowName>
            <Tree>
              <TreeRoot>
                <svg width="6" height="6" viewBox="0 0 6 6"><path d="M6 0v6H0z" fill="#4a4a4a" /></svg>
                Quick Analysis
              </TreeRoot>
              <TreeList>
                {pages.map((p) => (
                  <TreeItem key={p}>
                    <TreeLink href="#" $active={p === "Saturation Sweeps"}>{p}</TreeLink>
                  </TreeItem>
                ))}
              </TreeList>
            </Tree>
          </Sidebar>
        </LeftColumn>

        <Workspace>
          <TopBar>
            <Tabs>
              <Tab>History 1</Tab>
              <AddTab aria-label="Add history">
                <Disc $size={20} $dark>
                  <svg width="6" height="6" viewBox="0 0 6 6"><path d="M3 0v6M0 3h6" stroke="#888" /></svg>
                </Disc>
              </AddTab>
            </Tabs>
            <Devices>
              <Device $width={155} $mark="#00e000">
                <DeviceMenu aria-haspopup="menu" $inset={10}>
                  <DeviceLabel>X-Rite i1Pro 2<br />LCD Direct View</DeviceLabel>
                  <Disc $size={20} $dark><Arrow dir="down" /></Disc>
                </DeviceMenu>
                <Counter><CounterBadge>226</CounterBadge></Counter>
              </Device>
              <Device $width={130} $mark="#e6e600">
                <DeviceMenu aria-haspopup="menu">
                  <DeviceLabel>Source</DeviceLabel>
                  <Disc $size={20} $dark><Arrow dir="down" /></Disc>
                </DeviceMenu>
              </Device>
              <Device $width={144} $mark="#e6e600">
                <DeviceMenu aria-haspopup="menu">
                  <DeviceLabel>Direct Display Control</DeviceLabel>
                  <Disc $size={20} $dark><Arrow dir="down" /></Disc>
                </DeviceMenu>
              </Device>
              <Tools>
                <ToolButton aria-label="Settings"><Gear /></ToolButton>
                <ToolButton aria-label="Help"><Help /></ToolButton>
                <ToolButton aria-label="Collapse panel" $edge><Arrow dir="left" /></ToolButton>
              </Tools>
            </Devices>
          </TopBar>

          <Content>
            <ReadingColumn>
              <Heading>Saturation Sweeps</Heading>
              <BarChart
                id="rgb"
                title="RGB Balance"
                titleX={165}
                size={[334, 535]}
                plot={[40, 28, 270, 485]}
                range={[-4, 4]}
                step={1}
                bars={[
                  { x: 67, w: 69, from: 0, to: 4.1, color: "#ff0000", shade: "fade" },
                  { x: 138.5, w: 70, from: 0, to: -4.1, color: "#008000", shade: "tip" },
                  { x: 210, w: 70, from: 0, to: 4.1, color: "#00008c", shade: "deep" },
                ]}
                labels={[{ x: 174.5, text: "100%" }]}
                ticks={[40, 310]}
              />
              <Reading>
                <ReadingTitle>Current Reading</ReadingTitle>
                {readings.map((r) => <ReadingLine key={r}>{r}</ReadingLine>)}
              </Reading>
            </ReadingColumn>

            <SweepColumn>
              <DeltaRow>
                <DeltaChart name="DeltaL" value={-1.1} />
                <DeltaChart name="DeltaC" value={-8.6} />
                <DeltaChart name="DeltaH" value={-4.75} />
              </DeltaRow>
              <SwatchPanel>
                {[{ name: "Actual", colors: actualColors }, { name: "Target", colors: targetColors }].map((row) => (
                  <SwatchRow key={row.name}>
                    <SwatchCaption>{row.name}</SwatchCaption>
                    <SwatchCells>
                      {row.colors.map((c) => <SwatchCell key={c} $color={c} />)}
                    </SwatchCells>
                  </SwatchRow>
                ))}
                <SwatchRow>
                  <SwatchCells>
                    {saturations.map((s) => <SwatchLabel key={s}>{s}</SwatchLabel>)}
                  </SwatchCells>
                </SwatchRow>
              </SwatchPanel>
              <BarChart
                id="de"
                title="DeltaE 2000"
                titleX={325}
                size={[669, 320]}
                plot={[25, 24, 624, 271]}
                range={[0, 15]}
                step={5}
                bars={deltaEBars}
                limits={[
                  { value: 10, color: "#dc0a0a" },
                  { value: 5, color: "#f0f000" },
                  { value: 3, color: "#007a00" },
                ]}
                labels={[
                  { x: 76, text: "100" },
                  ...saturations.map((s, i) => ({ x: 180 + i * 104, text: s })),
                ]}
                ticks={[25, 129, 233, 337, 441, 545, 649]}
              />
            </SweepColumn>

            <GamutColumn>
              <GamutChart />
              <DataTable>
                <colgroup>
                  <Column $width={20} />
                  <Column $width={171} />
                  {saturations.map((s) => <Column key={s} $width={s === "100%" ? 80 : 85} />)}
                </colgroup>
                <thead>
                  <tr>
                    <HeadCell $corner />
                    <HeadCell />
                    {saturations.map((s) => <HeadCell key={s} scope="col">{s}</HeadCell>)}
                  </tr>
                </thead>
                <tbody>
                  {tableRows.map(([name, values], i) => (
                    <BodyRow key={name} $light={i % 2 === 1}>
                      <RowMark />
                      <RowHead scope="row">{name}</RowHead>
                      {values.map((v, j) => <Cell key={j}>{v}</Cell>)}
                    </BodyRow>
                  ))}
                </tbody>
              </DataTable>
            </GamutColumn>
          </Content>

          <PatternBar>
            <CurrentPattern aria-label="Current pattern">
              <Disc $size={15}><Arrow dir="up" color="#222" size={7} /></Disc>
              <CurrentColor />
            </CurrentPattern>
            {saturations.map((s, i) => (
              <PatternButton key={s} $active={s === "100%"}>
                <PatternColor $color={targetColors[i]} />
                <PatternLabel>{s}</PatternLabel>
              </PatternButton>
            ))}
            <Transport>
              <WindowPicker aria-label="Pattern window">
                <PickerTop><Disc $size={15}><Arrow dir="up" color="#222" size={7} /></Disc></PickerTop>
                <PickerFrame><PickerSquare /></PickerFrame>
              </WindowPicker>
              <TransportGrid>
                {transportIcons.map((t) => (
                  <TransportButton key={t.label} aria-label={t.label} $pressed={t.pressed}>
                    <Disc $size={20} $dark={t.pressed}>
                      <svg width="14" height="14" viewBox="0 0 14 14">{t.icon}</svg>
                    </Disc>
                  </TransportButton>
                ))}
                <StepButton><Disc $size={20}><Chevrons /></Disc>Back</StepButton>
                <StepButton $forward>Next<Disc $size={20}><Chevrons flip /></Disc></StepButton>
              </TransportGrid>
            </Transport>
          </PatternBar>
        </Workspace>
      </Body>

      <Taskbar>
        <StartButton aria-label="Start"><WindowsFlag /></StartButton>
        <Search type="text" aria-label="Suche" placeholder="Web und Windows durchsuchen" />
        <Apps>
          <TaskButton aria-label="Task view"><TaskView /></TaskButton>
          <TaskButton aria-label="Edge"><Edge /></TaskButton>
          <TaskButton aria-label="Explorer" $open><Explorer /></TaskButton>
          <TaskButton aria-label="Store"><Store /></TaskButton>
          <TaskButton aria-label="CalMAN" $open $active><CalmanTask /></TaskButton>
          <TaskButton aria-label="Paint" $open><Paint /></TaskButton>
        </Apps>
        <Tray>
          <TrayIcon name="chevron" />
          <TrayIcon name="power" />
          <TrayIcon name="wifi" />
          <TrayIcon name="sound" />
          <TrayIcon name="note" />
          <Clock>20:38<br />11.11.2015</Clock>
        </Tray>
      </Taskbar>
    </Window>
  );
}
